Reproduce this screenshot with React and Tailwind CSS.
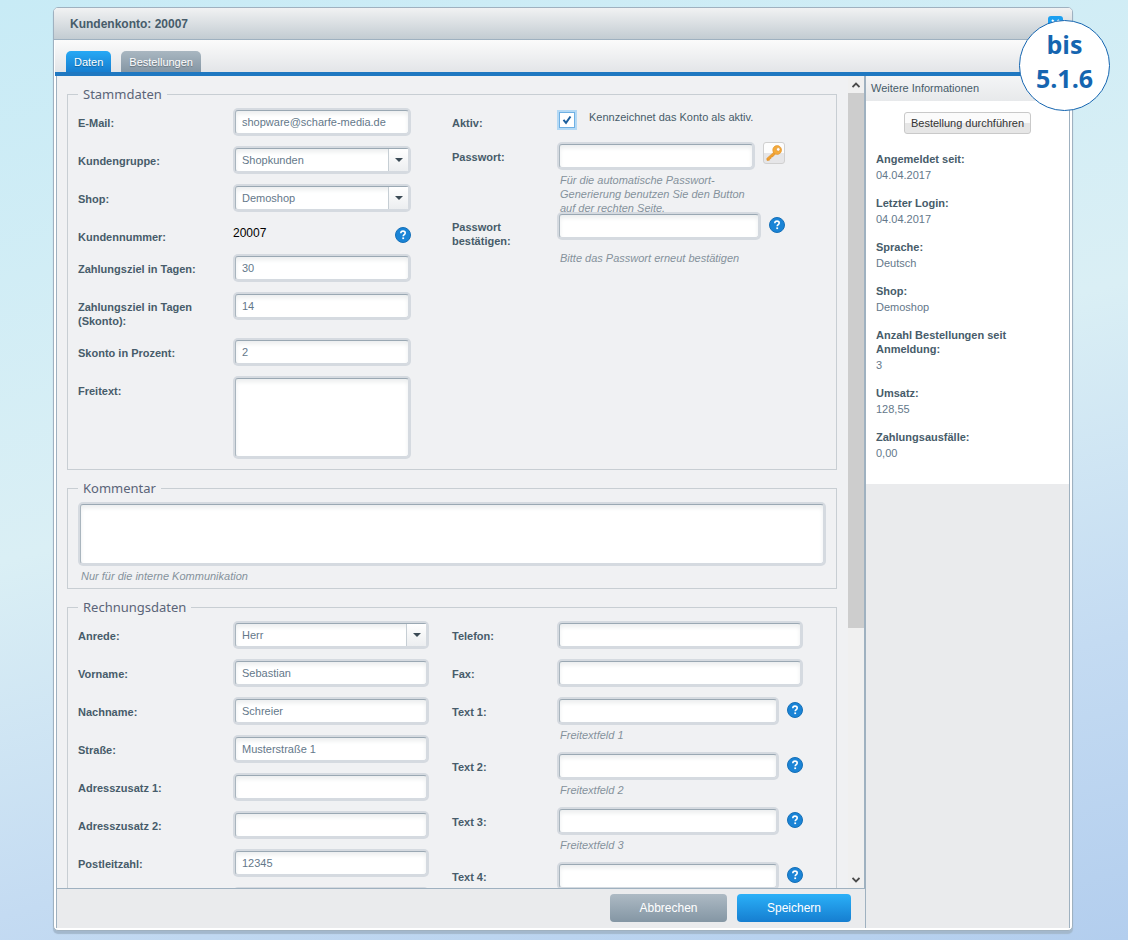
import { useId, useState } from 'react';

const inputClass =
  'block w-full min-w-0 border border-t-[#9aa8b3] border-l-[#a9b5be] border-r-[#d5dae0] border-b-[#d5dae0] rounded-[3px] bg-white inset-shadow-[0_3px_4px_#eceeef] ring-2 ring-[#d5dae0] text-[11px] leading-[14px] text-[#64788a] outline-none px-[6px]';

const accountInfo = [
  { label: 'Angemeldet seit:', value: '04.04.2017' },
  { label: 'Letzter Login:', value: '04.04.2017' },
  { label: 'Sprache:', value: 'Deutsch' },
  { label: 'Shop:', value: 'Demoshop' },
  { label: 'Anzahl Bestellungen seit Anmeldung:', value: '3' },
  { label: 'Umsatz:', value: '128,55' },
  { label: 'Zahlungsausfälle:', value: '0,00' },
];

const billingFields = [
  { label: 'Vorname:', value: 'Sebastian' },
  { label: 'Nachname:', value: 'Schreier' },
  { label: 'Straße:', value: 'Musterstraße 1' },
  { label: 'Adresszusatz 1:', value: '' },
  { label: 'Adresszusatz 2:', value: '' },
  { label: 'Postleitzahl:', value: '12345' },
  { label: 'Ort:', value: '' },
];

function HelpIcon() {
  return (
    <button type="button" aria-label="Hilfe" className="mt-[5px] block size-4 shrink-0">
      <svg viewBox="0 0 16 16" className="size-4">
        <circle cx="8" cy="8" r="7.5" fill="#1a84d6" stroke="#1670b8" />
        <path
          d="M5.8 6.2c0-1.4 1-2.1 2.2-2.1s2.2.7 2.2 1.9c0 1.6-2 1.6-2 3.3"
          fill="none"
          stroke="#fff"
          strokeWidth="1.6"
        />
        <rect x="7.3" y="10.4" width="1.8" height="1.7" fill="#fff" />
      </svg>
    </button>
  );
}

function KeyIcon() {
  return (
    <svg viewBox="0 0 16 16" className="size-4">
      <path
        d="M8.1 6.9 L0.8 13.4 L1 15.4 L3.4 15.2 L3.5 13.7 L5 13.6 L5.1 12 L6.6 11.9 L9.6 8.7"
        fill="#f0a030"
        stroke="#dd8a1c"
        strokeWidth="0.6"
      />
      <path
        fillRule="evenodd"
        d="M11.2 0.6a4.4 4.4 0 1 1-0.1 8.8a4.4 4.4 0 0 1 0.1-8.8zM12.2 2.6a1.8 1.8 0 1 0 0.1 3.6a1.8 1.8 0 0 0-0.1-3.6z"
        fill="#f4ab3c"
        stroke="#e0902a"
        strokeWidth="0.6"
      />
    </svg>
  );
}

function FieldSet({ title, className, children }) {
  return (
    <fieldset className={`min-w-0 border border-[#c8ced3] px-[10px] pt-[7px] ${className}`}>
      <legend className="px-[5px] font-['Noto_Sans',sans-serif] text-[13px] leading-[13px] text-[#5a6478]">
        {title}
      </legend>
      {children}
    </fieldset>
  );
}

// label on the left, control (and optional note) on the right
function Row({ label, id, narrow, className = '', children }) {
  return (
    <div className={`flex items-start ${className}`}>
      <label
        htmlFor={id}
        className={`shrink-0 pt-2 pr-3 text-[11px] leading-[14px] font-bold text-[#475c6a] ${
          narrow ? 'w-[105px]' : 'w-[155px]'
        }`}
      >
        {label}
      </label>
      <div className="min-w-0 flex-1">{children}</div>
    </div>
  );
}

function Note({ children, className = 'mt-[3px]' }) {
  return <p className={`pl-[3px] text-[11px] leading-[14px] text-[#85929c] italic ${className}`}>{children}</p>;
}

function TextField({ label, value = '', type = 'text', narrow, help, note }) {
  const id = useId();
  return (
    <Row label={label} id={id} narrow={narrow}>
      <div className="flex gap-2">
        <div className="min-w-0 flex-1 p-[2px]">
          <input id={id} type={type} defaultValue={value} className={`${inputClass} h-6`} />
        </div>
        {help && <HelpIcon />}
      </div>
      {note && <Note>{note}</Note>}
    </Row>
  );
}

function SelectField({ label, options }) {
  const id = useId();
  return (
    <Row label={label} id={id}>
      <div className="relative p-[2px]">
        <select id={id} className={`${inputClass} h-6 appearance-none`}>
          {options.map(option => (
            <option key={option}>{option}</option>
          ))}
        </select>
        <span className="pointer-events-none absolute inset-y-[3px] right-[3px] flex w-5 items-center justify-center border-l border-[#c6ced4] bg-linear-to-b from-white to-[#eceef0]">
          <svg viewBox="0 0 8 4" className="h-1 w-2">
            <path d="M0 0h8L4 4z" fill="#3b4a55" />
          </svg>
        </span>
      </div>
    </Row>
  );
}

function MasterData() {
  const activeId = useId();
  const numberId = useId();
  const passwordId = useId();
  const textId = useId();

  return (
    <FieldSet title="Stammdaten" className="pb-[10px]">
      <div className="grid grid-cols-2">
        <div className="flex flex-col gap-[10px] pr-[41px]">
          <TextField label="E-Mail:" value="shopware@scharfe-media.de" />
          <SelectField label="Kundengruppe:" options={['Shopkunden', 'Händler']} />
          <SelectField label="Shop:" options={['Demoshop']} />
          <Row label="Kundennummer:" id={numberId}>
            <div className="flex items-start justify-between">
              <output id={numberId} className="pt-[3px] text-[12px] leading-[16px] text-black">
                20007
              </output>
              <HelpIcon />
            </div>
          </Row>
          <TextField label="Zahlungsziel in Tagen:" value="30" />
          <TextField label="Zahlungsziel in Tagen (Skonto):" value="14" />
          <TextField label="Skonto in Prozent:" value="2" />
          <Row label="Freitext:" id={textId}>
            <div className="p-[2px]">
              <textarea id={textId} className={`${inputClass} h-[79px] resize-none`} />
            </div>
          </Row>
        </div>

        <div className="flex flex-col gap-[10px] pr-[41px]">
          <Row label="Aktiv:" id={activeId} narrow className="h-6">
            <div className="flex items-start gap-[14px]">
              <span className="relative mt-1 ml-[2px] block size-4 shrink-0">
                <input
                  id={activeId}
                  type="checkbox"
                  defaultChecked
                  className="peer block size-4 appearance-none border border-[#6fb0e3] bg-white ring-2 ring-[#b4d9f5]"
                />
                <svg
                  viewBox="0 0 16 16"
                  className="pointer-events-none absolute inset-0 hidden size-4 peer-checked:block"
                >
                  <path d="M4.5 7.8 L7 10.8 L11.5 4.5" fill="none" stroke="#1c5f9e" strokeWidth="2" />
                </svg>
              </span>
              <label htmlFor={activeId} className="pt-[2px] text-[11px] leading-[14px] whitespace-nowrap text-[#475c6a]">
                Kennzeichnet das Konto als aktiv.
              </label>
            </div>
          </Row>
          <Row label="Passwort:" id={passwordId} narrow className="h-[60px]">
            <div className="flex gap-2">
              <div className="min-w-0 flex-1 p-[2px]">
                <input id={passwordId} type="password" className={`${inputClass} h-6`} />
              </div>
              <button
                type="button"
                aria-label="Passwort generieren"
                className="flex size-[22px] items-center justify-center rounded-[3px] border border-[#d0d0d0] bg-linear-to-b from-[#fdfdfd] from-50% to-[#e6e6e8] to-50%"
              >
                <KeyIcon />
              </button>
            </div>
            <Note className="mt-[3px] pr-[30px]">
              Für die automatische Passwort-Generierung benutzen Sie den Button auf der rechten Seite.
            </Note>
          </Row>
          <div className="relative">
            <TextField label="Passwort bestätigen:" type="password" narrow help />
            <Note className="mt-[3px] pl-[108px] whitespace-nowrap">Bitte das Passwort erneut bestätigen</Note>
          </div>
        </div>
      </div>
    </FieldSet>
  );
}

function BillingData() {
  return (
    <FieldSet title="Rechnungsdaten" className="pb-[10px]">
      <div className="grid grid-cols-2">
        <div className="flex flex-col gap-[10px] pr-[23px]">
          <SelectField label="Anrede:" options={['Herr', 'Frau', 'Firma']} />
          {billingFields.map(field => (
            <TextField key={field.label} {...field} />
          ))}
        </div>
        <div className="flex flex-col gap-[10px] pr-[23px]">
          <TextField label="Telefon:" narrow />
          <TextField label="Fax:" narrow />
          {[1, 2, 3, 4].map(n => (
            <TextField key={n} label={`Text ${n}:`} narrow help note={`Freitextfeld ${n}`} />
          ))}
        </div>
      </div>
    </FieldSet>
  );
}

function ScrollArrow({ down }) {
  return (
    <span className="flex h-[17px] w-4 shrink-0 items-center justify-center">
      <svg viewBox="0 0 8 6" className="h-[6px] w-2">
        <path d={down ? 'M0.5 1L4 4.5L7.5 1' : 'M0.5 5L4 1.5L7.5 5'} fill="none" stroke="#4a4a4a" strokeWidth="1.8" />
      </svg>
    </span>
  );
}

function Sidebar() {
  return (
    <aside className="w-[204px] shrink-0 border-l border-[#9fb1c0] bg-[#eaebed]">
      <div className="bg-white pb-[24px]">
        <h2 className="bg-linear-to-b from-[#f4f5f6] to-[#e7e9eb] px-[5px] pt-[5px] pb-[6px] text-[11px] leading-[14px] text-[#475c6a]">
          Weitere Informationen
        </h2>
        <div className="flex justify-center pt-[11px] pb-[18px]">
          <button
            type="button"
            className="h-[22px] rounded-[3px] border border-[#c9c9c9] bg-linear-to-b from-[#fbfbfb] from-50% to-[#e6e6e6] to-50% px-[6px] text-[11px] leading-[14px] whitespace-nowrap text-[#333]"
          >
            Bestellung durchführen
          </button>
        </div>
        <dl className="flex flex-col gap-[14px] px-[10px] text-[11px] leading-[14px]">
          {accountInfo.map(item => (
            <div key={item.label} className="flex flex-col gap-[2px]">
              <dt className="pr-6 font-bold text-[#475c6a]">{item.label}</dt>
              <dd className="text-[#64788a]">{item.value}</dd>
            </div>
          ))}
        </dl>
      </div>
    </aside>
  );
}

export default function App() {
  const [tab, setTab] = useState('Daten');

  return (
    <div className="relative flex h-screen flex-col bg-[linear-gradient(166deg,#c8ebf6_0%,#daeff5_46%,#c4dbf2_75%,#b3ceee_100%)] pt-[7px] pr-[55px] pb-[9px] pl-[53px] font-['Liberation_Sans',Arial,sans-serif]">
      <main className="flex min-h-0 flex-1 flex-col rounded-[5px] border border-[#9fb1c0] bg-white shadow-[0_3px_1px_#a3b8cd]">
        <header className="flex h-8 shrink-0 items-center justify-between rounded-t-[4px] border-b border-[#9fb1c0] bg-linear-to-b from-[#f1f2f3] to-[#c3ccd2] pr-[9px] pl-4">
          <h1 className="text-[12px] leading-[16px] font-bold text-[#475c6a]">Kundenkonto: 20007</h1>
          <button type="button" aria-label="Schließen" className="size-[15px] rounded-[3px] bg-[#1c9ff0]">
            <svg viewBox="0 0 15 15" className="size-[15px]">
              <path d="M4 4l7 7M11 4l-7 7" stroke="#fff" strokeWidth="2" />
            </svg>
          </button>
        </header>

        <nav className="mx-px flex h-9 shrink-0 items-end gap-[10px] border-b-4 border-[#1f78c1] bg-linear-to-b from-[#fbfbfb] to-[#e3e5e8] px-[11px]">
          {['Daten', 'Bestellungen'].map(name => (
            <button
              key={name}
              type="button"
              onClick={() => setTab(name)}
              className={`h-[21px] rounded-t-[5px] bg-linear-to-b px-2 text-[11px] leading-[14px] text-white [text-shadow:0_1px_1px_rgb(0_0_0/30%)] ${
                tab === name ? 'from-[#27a9f5] to-[#167ed0]' : 'from-[#a9b7c1] to-[#8596a4]'
              }`}
            >
              {name}
            </button>
          ))}
        </nav>

        <div className="mx-[2px] mb-[2px] flex min-h-0 flex-1 border-x border-[#9fb1c0] bg-[#eaebed]">
          <form className="flex min-w-0 flex-1 flex-col" onSubmit={e => e.preventDefault()}>
            <div className="flex min-h-0 flex-1 border-r border-b border-[#9fb1c0] bg-[#f0f1f3]">
              <div className="flex min-w-0 flex-1 flex-col gap-3 overflow-y-auto pt-3 pr-[11px] pb-3 pl-[10px] [scrollbar-width:none]">
                <MasterData />
                <FieldSet title="Kommentar" className="pb-[5px]">
                  <div className="p-[2px]">
                    <textarea aria-label="Kommentar" className={`${inputClass} h-[60px] resize-none`} />
                  </div>
                  <Note>Nur für die interne Kommunikation</Note>
                </FieldSet>
                <BillingData />
              </div>
              <div aria-hidden="true" className="flex w-4 shrink-0 flex-col bg-[#f0f0f0]">
                <ScrollArrow />
                <div className="flex-[535] bg-[#cdcdcd]" />
                <div className="flex-[243]" />
                <ScrollArrow down />
              </div>
            </div>
            <footer className="flex h-[39px] shrink-0 items-start justify-end gap-[10px] pt-[5px] pr-[14px] text-[12px] leading-[16px] text-white [text-shadow:0_1px_1px_rgb(0_0_0/35%)]">
              <button type="button" className="h-7 w-[117px] rounded-[4px] bg-linear-to-b from-[#adbac4] to-[#8496a4]">
                Abbrechen
              </button>
              <button type="submit" className="h-7 w-[114px] rounded-[4px] bg-linear-to-b from-[#2bb0f8] to-[#167ed0]">
                Speichern
              </button>
            </footer>
          </form>
          <Sidebar />
        </div>
      </main>

      {/* version badge over the window corner */}
      <div className="absolute top-5 right-[18px] flex size-[91px] flex-col items-center rounded-full border border-[#1565b0] bg-white pt-[6px] font-['Open_Sans',sans-serif] text-[25px] leading-[34px] font-bold text-[#1565b0]">
        <span>bis</span>
        <span>5.1.6</span>
      </div>
    </div>
  );
}
